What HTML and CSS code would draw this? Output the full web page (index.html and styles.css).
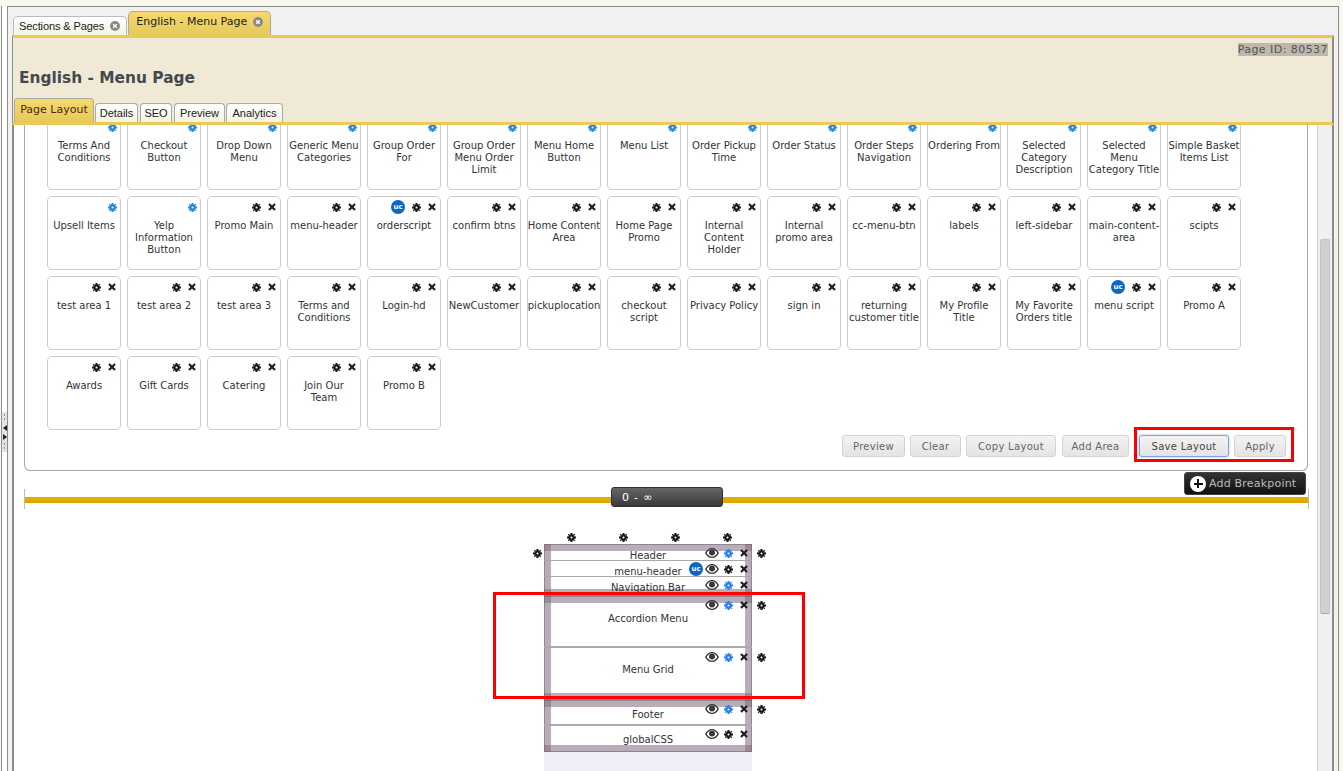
FILE: index.html
```html
<!DOCTYPE html>
<html lang="en">
<head>
<meta charset="utf-8">
<title>English - Menu Page</title>
<link rel="stylesheet" href="styles.css">
</head>
<body>
<svg class="defs" width="0" height="0" aria-hidden="true">
  <defs>
    <symbol id="gear" viewBox="0 0 12 12">
      <path fill-rule="evenodd" d="M4.6 0h2.800v1.800l1.200.5L9.900 1 11 2.100 9.700 3.400l.5 1.200H12v2.800h-1.800l-.5 1.200L11 9.900 9.900 11 8.600 9.700l-1.200.5V12H4.600v-1.800l-1.200-.5L2.100 11 1 9.900l1.300-1.300-.5-1.200H0V4.600h1.800l.5-1.200L1 2.100 2.100 1l1.300 1.300 1.200-.5zM6 4.700a1.300 1.300 0 1 0 0 2.600 1.300 1.300 0 0 0 0-2.600z"/>
    </symbol>
    <symbol id="cross" viewBox="0 0 10 10">
      <path d="M2.200.3 5 3.100 7.800.3l1.900 1.900L6.900 5l2.800 2.800-1.900 1.900L5 6.900 2.200 9.700.3 7.800 3.100 5 .3 2.200z"/>
    </symbol>
    <symbol id="eye" viewBox="0 0 14 10">
      <path fill-rule="evenodd" d="M7 0c3 0 5.500 2 7 5-1.500 3-4 5-7 5S1.500 8 0 5c1.500-3 4-5 7-5zM7 1.300C4.900 1.300 3 2.700 1.600 5 3 7.300 4.900 8.700 7 8.700s4-1.400 5.400-3.700C11 2.700 9.100 1.300 7 1.300z"/>
      <circle cx="7" cy="4.600" r="3"/>
    </symbol>
    <symbol id="close-dot" viewBox="0 0 10 10">
      <circle cx="5" cy="5" r="5" fill="#8a8a8a"/>
      <path d="M3.200 3.200l3.600 3.600M6.800 3.200 3.200 6.800" stroke="#fff" stroke-width="1.300"/>
    </symbol>
  </defs>
</svg>

<div class="page">
  <aside class="splitter">
    <div class="grip">
      <span class="dash"></span>
      <span class="arrow arrow-left"></span>
      <span class="arrow arrow-right"></span>
      <span class="dash"></span>
    </div>
  </aside>

  <div class="shell">
    <nav class="main-tabs">
      <a class="main-tab">Sections &amp; Pages <svg class="tab-close"><use href="#close-dot"/></svg></a>
      <a class="main-tab active">English - Menu Page <svg class="tab-close"><use href="#close-dot"/></svg></a>
    </nav>

    <header class="page-head">
      <div class="page-id-row"><span class="page-id">Page ID: 80537</span></div>
      <h1 class="page-title">English - Menu Page</h1>
      <nav class="sub-tabs">
        <a class="sub-tab active">Page Layout</a>
        <a class="sub-tab tab-details">Details</a>
        <a class="sub-tab tab-seo">SEO</a>
        <a class="sub-tab tab-preview">Preview</a>
        <a class="sub-tab tab-analytics">Analytics</a>
      </nav>
    </header>

    <div class="work">
      <main class="scroll-body">
        <section class="areas">
          <div class="card-grid">
            <div class="card"><div class="tools"><svg class="gear blue"><use href="#gear"/></svg></div><p>Terms And Conditions</p></div>
            <div class="card"><div class="tools"><svg class="gear blue"><use href="#gear"/></svg></div><p>Checkout Button</p></div>
            <div class="card"><div class="tools"><svg class="gear blue"><use href="#gear"/></svg></div><p>Drop Down Menu</p></div>
            <div class="card"><div class="tools"><svg class="gear blue"><use href="#gear"/></svg></div><p>Generic Menu Categories</p></div>
            <div class="card"><div class="tools"><svg class="gear blue"><use href="#gear"/></svg></div><p>Group Order For</p></div>
            <div class="card"><div class="tools"><svg class="gear blue"><use href="#gear"/></svg></div><p>Group Order Menu Order Limit</p></div>
            <div class="card"><div class="tools"><svg class="gear blue"><use href="#gear"/></svg></div><p>Menu Home Button</p></div>
            <div class="card"><div class="tools"><svg class="gear blue"><use href="#gear"/></svg></div><p>Menu List</p></div>
            <div class="card"><div class="tools"><svg class="gear blue"><use href="#gear"/></svg></div><p>Order Pickup Time</p></div>
            <div class="card"><div class="tools"><svg class="gear blue"><use href="#gear"/></svg></div><p>Order Status</p></div>
            <div class="card"><div class="tools"><svg class="gear blue"><use href="#gear"/></svg></div><p>Order Steps Navigation</p></div>
            <div class="card"><div class="tools"><svg class="gear blue"><use href="#gear"/></svg></div><p>Ordering From</p></div>
            <div class="card"><div class="tools"><svg class="gear blue"><use href="#gear"/></svg></div><p>Selected Category Description</p></div>
            <div class="card"><div class="tools"><svg class="gear blue"><use href="#gear"/></svg></div><p>Selected<br>Menu<br>Category Title</p></div>
            <div class="card"><div class="tools"><svg class="gear blue"><use href="#gear"/></svg></div><p>Simple Basket Items List</p></div>

            <div class="card"><div class="tools"><svg class="gear blue"><use href="#gear"/></svg></div><p>Upsell Items</p></div>
            <div class="card"><div class="tools"><svg class="gear blue"><use href="#gear"/></svg></div><p>Yelp Information Button</p></div>
            <div class="card"><div class="tools"><svg class="gear"><use href="#gear"/></svg><svg class="cross"><use href="#cross"/></svg></div><p>Promo Main</p></div>
            <div class="card"><div class="tools"><svg class="gear"><use href="#gear"/></svg><svg class="cross"><use href="#cross"/></svg></div><p>menu-header</p></div>
            <div class="card"><div class="tools"><span class="uc">uc</span><svg class="gear"><use href="#gear"/></svg><svg class="cross"><use href="#cross"/></svg></div><p>orderscript</p></div>
            <div class="card"><div class="tools"><svg class="gear"><use href="#gear"/></svg><svg class="cross"><use href="#cross"/></svg></div><p>confirm btns</p></div>
            <div class="card"><div class="tools"><svg class="gear"><use href="#gear"/></svg><svg class="cross"><use href="#cross"/></svg></div><p>Home Content Area</p></div>
            <div class="card"><div class="tools"><svg class="gear"><use href="#gear"/></svg><svg class="cross"><use href="#cross"/></svg></div><p>Home Page Promo</p></div>
            <div class="card"><div class="tools"><svg class="gear"><use href="#gear"/></svg><svg class="cross"><use href="#cross"/></svg></div><p>Internal Content Holder</p></div>
            <div class="card"><div class="tools"><svg class="gear"><use href="#gear"/></svg><svg class="cross"><use href="#cross"/></svg></div><p>Internal<br>promo area</p></div>
            <div class="card"><div class="tools"><svg class="gear"><use href="#gear"/></svg><svg class="cross"><use href="#cross"/></svg></div><p>cc-menu-btn</p></div>
            <div class="card"><div class="tools"><svg class="gear"><use href="#gear"/></svg><svg class="cross"><use href="#cross"/></svg></div><p>labels</p></div>
            <div class="card"><div class="tools"><svg class="gear"><use href="#gear"/></svg><svg class="cross"><use href="#cross"/></svg></div><p>left-sidebar</p></div>
            <div class="card"><div class="tools"><svg class="gear"><use href="#gear"/></svg><svg class="cross"><use href="#cross"/></svg></div><p>main-content-area</p></div>
            <div class="card"><div class="tools"><svg class="gear"><use href="#gear"/></svg><svg class="cross"><use href="#cross"/></svg></div><p>scipts</p></div>

            <div class="card"><div class="tools"><svg class="gear"><use href="#gear"/></svg><svg class="cross"><use href="#cross"/></svg></div><p>test area 1</p></div>
            <div class="card"><div class="tools"><svg class="gear"><use href="#gear"/></svg><svg class="cross"><use href="#cross"/></svg></div><p>test area 2</p></div>
            <div class="card"><div class="tools"><svg class="gear"><use href="#gear"/></svg><svg class="cross"><use href="#cross"/></svg></div><p>test area 3</p></div>
            <div class="card"><div class="tools"><svg class="gear"><use href="#gear"/></svg><svg class="cross"><use href="#cross"/></svg></div><p>Terms and Conditions</p></div>
            <div class="card"><div class="tools"><svg class="gear"><use href="#gear"/></svg><svg class="cross"><use href="#cross"/></svg></div><p>Login-hd</p></div>
            <div class="card"><div class="tools"><svg class="gear"><use href="#gear"/></svg><svg class="cross"><use href="#cross"/></svg></div><p>NewCustomer</p></div>
            <div class="card"><div class="tools"><svg class="gear"><use href="#gear"/></svg><svg class="cross"><use href="#cross"/></svg></div><p>pickuplocation</p></div>
            <div class="card"><div class="tools"><svg class="gear"><use href="#gear"/></svg><svg class="cross"><use href="#cross"/></svg></div><p>checkout script</p></div>
            <div class="card"><div class="tools"><svg class="gear"><use href="#gear"/></svg><svg class="cross"><use href="#cross"/></svg></div><p>Privacy Policy</p></div>
            <div class="card"><div class="tools"><svg class="gear"><use href="#gear"/></svg><svg class="cross"><use href="#cross"/></svg></div><p>sign in</p></div>
            <div class="card"><div class="tools"><svg class="gear"><use href="#gear"/></svg><svg class="cross"><use href="#cross"/></svg></div><p>returning customer title</p></div>
            <div class="card"><div class="tools"><svg class="gear"><use href="#gear"/></svg><svg class="cross"><use href="#cross"/></svg></div><p>My Profile<br>Title</p></div>
            <div class="card"><div class="tools"><svg class="gear"><use href="#gear"/></svg><svg class="cross"><use href="#cross"/></svg></div><p>My Favorite Orders title</p></div>
            <div class="card"><div class="tools"><span class="uc">uc</span><svg class="gear"><use href="#gear"/></svg><svg class="cross"><use href="#cross"/></svg></div><p>menu script</p></div>
            <div class="card"><div class="tools"><svg class="gear"><use href="#gear"/></svg><svg class="cross"><use href="#cross"/></svg></div><p>Promo A</p></div>

            <div class="card"><div class="tools"><svg class="gear"><use href="#gear"/></svg><svg class="cross"><use href="#cross"/></svg></div><p>Awards</p></div>
            <div class="card"><div class="tools"><svg class="gear"><use href="#gear"/></svg><svg class="cross"><use href="#cross"/></svg></div><p>Gift Cards</p></div>
            <div class="card"><div class="tools"><svg class="gear"><use href="#gear"/></svg><svg class="cross"><use href="#cross"/></svg></div><p>Catering</p></div>
            <div class="card"><div class="tools"><svg class="gear"><use href="#gear"/></svg><svg class="cross"><use href="#cross"/></svg></div><p>Join Our<br>Team</p></div>
            <div class="card"><div class="tools"><svg class="gear"><use href="#gear"/></svg><svg class="cross"><use href="#cross"/></svg></div><p>Promo B</p></div>
          </div>

          <div class="actions">
            <button class="btn btn-preview">Preview</button>
            <button class="btn btn-clear">Clear</button>
            <button class="btn btn-copy">Copy Layout</button>
            <button class="btn btn-add">Add Area</button>
            <button class="btn btn-save">Save Layout</button>
            <button class="btn btn-apply">Apply</button>
            <span class="red-box red-box-actions"></span>
          </div>
        </section>

        <section class="breakpoints">
          <div class="bp-toolbar">
            <button class="add-bp"><span class="plus"></span>Add Breakpoint</button>
          </div>
          <div class="bp-track">
            <span class="bp-tick bp-tick-left"></span>
            <span class="bp-bar"></span>
            <span class="bp-tick bp-tick-right"></span>
            <span class="bp-pill">0 - ∞</span>
          </div>

          <div class="diagram">
            <div class="col-gears">
              <svg class="gear"><use href="#gear"/></svg>
              <svg class="gear"><use href="#gear"/></svg>
              <svg class="gear"><use href="#gear"/></svg>
              <svg class="gear"><use href="#gear"/></svg>
            </div>

            <div class="stack">
              <div class="section section-a">
                <div class="row row-header"><span>Header</span>
                  <div class="row-tools"><svg class="eye"><use href="#eye"/></svg><svg class="gear blue"><use href="#gear"/></svg><svg class="cross"><use href="#cross"/></svg></div>
                </div>
                <div class="row row-menuheader"><span>menu-header</span>
                  <div class="row-tools"><span class="uc">uc</span><svg class="eye"><use href="#eye"/></svg><svg class="gear"><use href="#gear"/></svg><svg class="cross"><use href="#cross"/></svg></div>
                </div>
                <div class="row row-nav"><span>Navigation Bar</span>
                  <div class="row-tools"><svg class="eye"><use href="#eye"/></svg><svg class="gear blue"><use href="#gear"/></svg><svg class="cross"><use href="#cross"/></svg></div>
                </div>
              </div>
              <div class="section section-b">
                <div class="row row-accordion"><span>Accordion Menu</span>
                  <div class="row-tools"><svg class="eye"><use href="#eye"/></svg><svg class="gear blue"><use href="#gear"/></svg><svg class="cross"><use href="#cross"/></svg></div>
                </div>
                <div class="row row-grid"><span>Menu Grid</span>
                  <div class="row-tools"><svg class="eye"><use href="#eye"/></svg><svg class="gear blue"><use href="#gear"/></svg><svg class="cross"><use href="#cross"/></svg></div>
                </div>
              </div>
              <div class="section section-c">
                <div class="row row-footer"><span>Footer</span>
                  <div class="row-tools"><svg class="eye"><use href="#eye"/></svg><svg class="gear blue"><use href="#gear"/></svg><svg class="cross"><use href="#cross"/></svg></div>
                </div>
                <div class="row row-css"><span>globalCSS</span>
                  <div class="row-tools"><svg class="eye"><use href="#eye"/></svg><svg class="gear"><use href="#gear"/></svg><svg class="cross"><use href="#cross"/></svg></div>
                </div>
              </div>
              <div class="stack-foot"></div>

              <svg class="gear side-left"><use href="#gear"/></svg>
              <svg class="gear side-right side-1"><use href="#gear"/></svg>
              <svg class="gear side-right side-2"><use href="#gear"/></svg>
              <svg class="gear side-right side-3"><use href="#gear"/></svg>
              <svg class="gear side-right side-4"><use href="#gear"/></svg>
              <span class="red-box red-box-diagram"></span>
            </div>
          </div>
        </section>
      </main>

      <div class="scrollbar"><div class="thumb"></div></div>
    </div>
  </div>
</div>
</body>
</html>
```

FILE: styles.css
```css
* { box-sizing: border-box; }

html, body {
  margin: 0;
  height: 100%;
  overflow: hidden;
}

body {
  background: #f8f8ef;
  font-family: "DejaVu Sans", Verdana, sans-serif;
  color: #333;
}

.defs { position: absolute; }

.page {
  display: flex;
  height: 771px;
  width: 1339px;
  padding-top: 6px;
}

/* left collapse handle */
.splitter {
  width: 6px;
  margin-left: 1px;
  flex: none;
  border-left: 1px solid #8c8c8c;
  background: #fff;
  display: flex;
  align-items: center;
}

.grip {
  width: 5px;
  height: 40px;
  background: #e4e4e4;
  margin-top: 87px;
  display: flex;
  flex-direction: column;
  align-items: center;
  gap: 3px;
  padding: 2px 0;
}

.dash {
  width: 1px;
  flex: 1;
  background: repeating-linear-gradient(to bottom, #888 0 2px, transparent 2px 4px);
}

.arrow {
  width: 0;
  height: 0;
  border-top: 3px solid transparent;
  border-bottom: 3px solid transparent;
}
.arrow-left { border-right: 4px solid #222; }
.arrow-right { border-left: 4px solid #222; }

/* shell */
.shell {
  flex: 1;
  min-width: 0;
  display: flex;
  flex-direction: column;
  background: #f1f1f1;
  border: 1px solid #8c8c8c;
  border-bottom: 0;
  padding: 0 4px;
}

.main-tabs {
  height: 28px;
  display: flex;
  align-items: flex-end;
  gap: 1px;
  padding-left: 1px;
  flex: none;
}

.main-tab {
  display: flex;
  align-items: center;
  gap: 6px;
  height: 19px;
  padding: 0 6px 0 5px;
  font: 11px/19px "Liberation Sans", Arial, sans-serif;
  letter-spacing: -0.1px;
  color: #222;
  background: linear-gradient(#fff, #f5f3e0);
  border: 1px solid #bbb;
  border-bottom: 0;
  border-radius: 5px 5px 0 0;
}
.main-tab.active {
  height: 24px;
  padding: 0 7px 4px 7px;
  background: linear-gradient(#f5d96e, #e6c95a);
  border-color: #a9a9a9;
  font-family: "DejaVu Sans", sans-serif;
  font-size: 11px;
  letter-spacing: 0;
}

.tab-close { width: 10px; height: 10px; flex: none; }

/* page head */
.page-head {
  height: 90px;
  flex: none;
  background: #efe9d6;
  border-top: 3px solid #e8cb55;
  border-bottom: 3px solid #e8cb55;
  display: flex;
  flex-direction: column;
  border-right: 2px solid #8c8c8c;
  border-left: 1px solid #8c8c8c;
}

.page-id-row {
  display: flex;
  justify-content: flex-end;
  padding: 5px 4px 0 0;
  height: 22px;
}

.page-id {
  background: #bcb8ad;
  color: #555;
  font-size: 11px;
  line-height: 13px;
  height: 13px;
  letter-spacing: 0.45px;
}

.page-title {
  margin: 7px 0 0 6px;
  font-size: 15.4px;
  line-height: 22px;
  font-weight: bold;
  color: #434a4e;
}

.sub-tabs {
  margin-top: auto;
  display: flex;
  align-items: flex-end;
  padding-left: 1px;
}

.sub-tab {
  height: 19px;
  text-align: center;
  font: 11px/18px "Liberation Sans", Arial, sans-serif;
  color: #222;
  background: linear-gradient(#fff, #f5f3e0);
  border: 1px solid #aaa;
  border-bottom: 0;
  border-radius: 4px 4px 0 0;
}
.sub-tab.active {
  height: 24px;
  width: 80px;
  background: linear-gradient(#f5d96e, #e6c95a);
  font-family: "DejaVu Sans", sans-serif;
  font-size: 11px;
  line-height: 22px;
  color: #4a2a10;
}
.tab-details { width: 43px; margin-left: 1px; }
.tab-seo { width: 32px; margin-left: 2px; }
.tab-preview { width: 51px; margin-left: 2px; }
.tab-analytics { width: 57px; margin-left: 1px; }

/* work area */
.work {
  flex: 1;
  min-height: 0;
  display: flex;
  background: #fff;
  border-right: 2px solid #8c8c8c;
  border-left: 2px solid #8c8c8c;
  overflow: hidden;
}

.scroll-body {
  flex: 1;
  min-width: 0;
  overflow: hidden;
  padding: 0 9px 0 10px;
}

.scrollbar {
  width: 15px;
  flex: none;
  background: #f0f0f0;
  border-left: 1px solid #d0d0d0;
  padding: 114px 2px 0 2px;
}

.thumb {
  height: 375px;
  background: #d0d0d0;
  border: 1px solid #c4c4c4;
  border-bottom-color: #a8a8a8;
  border-radius: 2px;
}

/* areas panel */
.areas {
  border: 1px solid #a8a8a8;
  border-top: 0;
  border-radius: 0 0 6px 6px;
  padding: 0 22px;
  height: 355px;
  position: relative;
}

.card-grid {
  display: grid;
  grid-template-columns: repeat(15, 74px);
  grid-auto-rows: 74px;
  gap: 6px;
  margin-top: -9px;
}

.card {
  border: 1px solid #ccc;
  border-radius: 5px;
  background: #fff;
  overflow: hidden;
}

.tools {
  height: 21px;
  display: flex;
  justify-content: flex-end;
  align-items: center;
  padding-right: 3px;
  gap: 7px;
}

.card p {
  margin: 2px -1px 0;
  font-size: 10px;
  line-height: 12px;
  text-align: center;
  color: #333;
}

svg.gear { width: 9px; height: 9px; fill: #1c1c1c; flex: none; }
svg.gear.blue { fill: #2a7ff0; }
svg.cross { width: 8px; height: 8px; fill: #1c1c1c; flex: none; }
svg.eye { width: 14px; height: 10px; fill: #3a3a3a; flex: none; }

.tools svg.cross { margin: -1px 1px 0 0; }

.uc {
  width: 14px;
  height: 14px;
  border-radius: 50%;
  background: #0b66c8;
  color: #fff;
  font-size: 7px;
  line-height: 14px;
  font-weight: bold;
  text-align: center;
  flex: none;
}
.tools .uc { margin-top: -1px; }

.actions {
  position: absolute;
  left: 0;
  right: 0;
  top: 319px;
  display: flex;
  justify-content: flex-end;
  padding-right: 21px;
  gap: 5px;
}

.btn {
  height: 22px;
  padding: 0;
  font-family: "DejaVu Sans", sans-serif;
  font-size: 10px;
  letter-spacing: 0.3px;
  color: #666;
  background: linear-gradient(#f3f3f3, #e4e4e4);
  border: 1px solid #d4d4d4;
  border-radius: 3px;
}
.btn-preview { width: 63px; }
.btn-clear { width: 51px; }
.btn-copy { width: 90px; }
.btn-add { width: 67px; margin-left: 1px; }
.btn-save {
  width: 90px;
  margin-left: 5px;
  color: #444;
  border-color: #7fa2e0;
  box-shadow: 0 0 2px #8aa8dc;
}
.btn-apply { width: 52px; }

.red-box {
  position: absolute;
  border: 3px solid #f00;
  pointer-events: none;
}
.red-box-actions {
  top: -8px;
  right: 13px;
  width: 160px;
  height: 35px;
}

/* breakpoints */
.bp-toolbar {
  display: flex;
  justify-content: flex-end;
  height: 26px;
  padding: 1px 2px 0 0;
}

.add-bp {
  width: 122px;
  height: 23px;
  display: flex;
  align-items: center;
  gap: 3px;
  padding: 0 0 0 5px;
  background: linear-gradient(#333, #111);
  border: 1px solid #444;
  border-radius: 3px;
  color: #bbb;
  font-family: "DejaVu Sans", sans-serif;
  font-size: 11px;
  letter-spacing: 0.2px;
}

.plus {
  width: 16px;
  height: 16px;
  border-radius: 50%;
  background:
    linear-gradient(#111, #111) center / 9px 2px no-repeat,
    linear-gradient(#111, #111) center / 2px 9px no-repeat,
    #fff;
  flex: none;
}

.bp-track {
  position: relative;
  height: 6px;
  margin-right: -1px;
}

.bp-bar {
  display: block;
  height: 6px;
  margin-left: 1px;
  background: linear-gradient(#e8ae00, #dda400);
}

.bp-tick {
  position: absolute;
  width: 1px;
  top: -8px;
  height: 20px;
  background: #bbb;
}
.bp-tick-left { left: 0; }
.bp-tick-right { right: 0; }

.bp-pill {
  position: absolute;
  top: -10px;
  left: 587px;
  width: 112px;
  height: 20px;
  background: linear-gradient(#666, #3a3a3a);
  border: 1px solid #333;
  border-radius: 3px;
  color: #fff;
  font-size: 11px;
  line-height: 19px;
  padding-left: 10px;
  letter-spacing: 0.8px;
}

/* layout diagram */
.diagram {
  margin-top: 41px;
  margin-left: 520px;
  width: 208px;
  position: relative;
}

.col-gears {
  position: absolute;
  top: -11px;
  left: 23px;
  display: flex;
  gap: 43px;
}

.stack {
  position: relative;
  width: 208px;
}

.section {
  padding: 7px;
  background:
    linear-gradient(#9a8a96, #9a8a96) left top / 7px 7px no-repeat,
    linear-gradient(#9a8a96, #9a8a96) right top / 7px 7px no-repeat,
    linear-gradient(#9a8a96, #9a8a96) left bottom / 7px 7px no-repeat,
    linear-gradient(#9a8a96, #9a8a96) right bottom / 7px 7px no-repeat,
    #b9adb8;
  box-shadow: inset 0 0 0 1px rgba(100, 85, 100, 0.45);
}

.section-a { height: 52px; }
.section-b { height: 104px; }
.section-c { height: 52px; }

.row {
  position: relative;
  background: #fff;
  font-size: 10px;
  line-height: 12px;
  text-align: center;
  color: #333;
}
.row > span:first-child { display: block; }
.row + .row { border-top: 1px solid #a9a9a9; }
.row + .row::before {
  content: "";
  position: absolute;
  left: -7px;
  right: -7px;
  top: -1px;
  height: 1px;
  background: #a9a9a9;
}

.row-header { height: 9px; }
.row-header > span:first-child { position: relative; top: -1px; }
.row-menuheader { height: 16px; }
.row-menuheader > span:first-child { padding-top: 5px; }
.row-nav { height: 13px; }
.row-nav > span:first-child { padding-top: 5px; }
.row-accordion { height: 43px; }
.row-accordion > span:first-child { padding-top: 10px; }
.row-grid { height: 47px; }
.row-grid > span:first-child { padding-top: 16px; }
.row-footer { height: 17px; }
.row-footer > span:first-child { padding-top: 2px; }
.row-css { height: 21px; }
.row-css > span:first-child { padding-top: 8px; }

.section .row-grid, .section .row-css { border-top-width: 2px; }
.section .row-grid::before, .section .row-css::before { top: -2px; height: 2px; }

.row-tools {
  position: absolute;
  right: -3px;
  height: 10px;
  display: flex;
  align-items: center;
}
.row-header .row-tools, .row-accordion .row-tools, .row-footer .row-tools { top: -3px; }
.row-menuheader .row-tools, .row-nav .row-tools, .row-css .row-tools { top: 3px; }
.row-grid .row-tools { top: 4px; }

.row-tools .uc { margin-right: 2px; }
.row-tools svg.gear { margin-left: 5px; }
.row-tools svg.cross { margin-left: 7px; }

.stack-foot { height: 19px; background: #eeeef7; }

.side-left { position: absolute; left: -11px; top: 5px; }
.side-right { position: absolute; right: -14px; }
.side-1 { top: 5px; }
.side-2 { top: 57px; }
.side-3 { top: 109px; }
.side-4 { top: 161px; }

.red-box-diagram {
  left: -51px;
  top: 48px;
  width: 312px;
  height: 107px;
}
```
